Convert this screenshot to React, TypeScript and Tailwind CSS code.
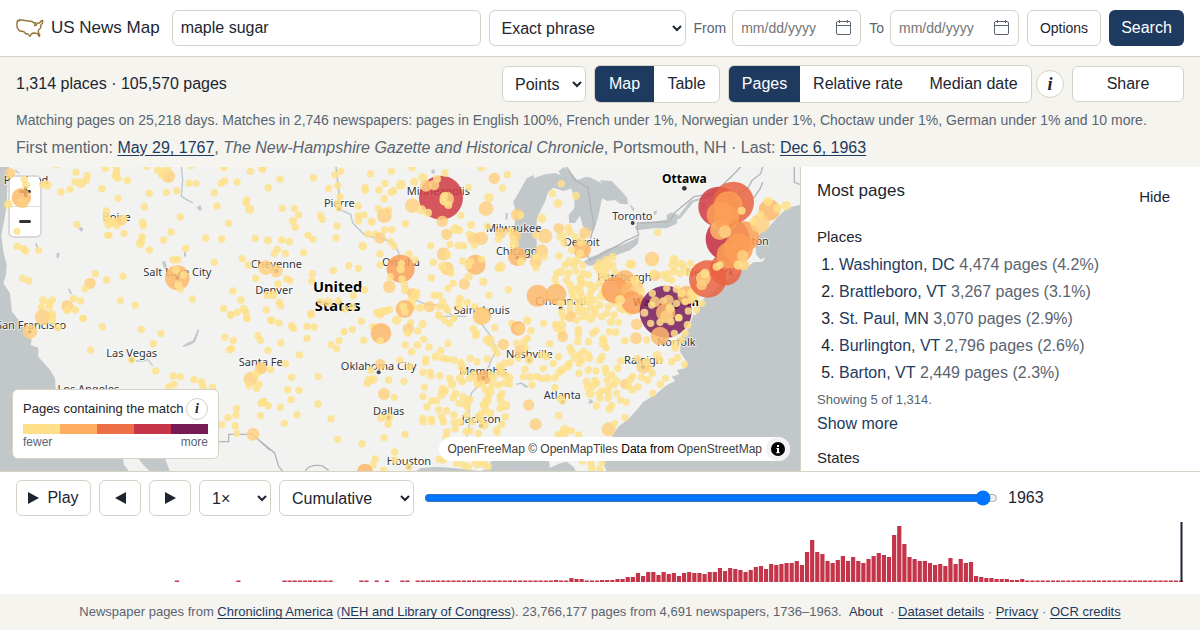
import React from "react";

const control =
  "h-9 rounded-md border border-[#d6d2c6] bg-white text-[#1c2530] text-base";
const link = "text-[#1e3a5f] underline underline-offset-2";

type Tile = {
  x: number;
  y: number;
  water?: string[];
  rivers?: string[];
  borders?: string[];
  dots: string;
};

// The map is split in six tiles. Dots are "x,y,radius,colour" with radius and colour optional.
const tiles: Tile[] = [
  {
    x: 0,
    y: -6,
    water: [
      "M0 0H28L24 30 22 60 20 120 12 170 4 210 10 260 20 300 18 330 10 355 30 385 36 440 60 470H0Z",
      "M590 128l10 -8 6 12 -6 6zM235 190l10 -4 6 8 -8 6zM105 236l6 -2 4 14 -4 2zM170 264l8 0 -2 16 -6 0zM204 370l6 2 6 14 -6 2zM486 290l10 -2 4 18 8 14 -8 4 -10 -20zM552 262l6 0 0 14 -6 -2z",
    ],
    rivers: ["M544 4l4 40 -4 50 20 12 16 8", "M45 15l12 10"],
    dots: "30,25,16 73,43 78,60,12 128,58 141,60,14 64,98,29,1 25,118,13 68,112,18 51,199 51,244 70,250 77,258 116,256 183,81 210,73 228,22 225,50 243,55,15 262,32 260,45 170,0 306,71,11 316,10 349,8 350,20 347,32,12 354,40 382,46 354,100 448,85 440,4 473,15 505,34,20 490,22 500,12,14 486,30 500,82 530,77 567,55 588,55 573,2 433,125 428,172 430,182 513,201 541,156 491,225 426,215 421,236,13 424,228 448,255 319,138 319,152 320,165 330,170,14 345,172,14 350,180,13 365,165,16 372,160 325,180 327,211,11 323,211 372,205 231,178 672,8 674,48 663,55 643,83 651,123 711,51 751,19 786,11 740,105 738,113 749,133,14 686,175 617,219 665,222 766,220 557,250 643,292 727,281 745,300 767,340 520,284 533,284 532,338,37,1 528,315,13 551,330 535,360,12 541,372 577,402 699,378 723,405 671,431 692,448 712,442 731,432,12 738,442 286,326 320,345 369,334 361,406 406,421 270,355,17 255,371 242,408 221,401 202,423,18 202,435,12 226,435 249,460 68,340 86,347 129,406,12 124,427 157,405 148,415 148,425 155,447,12 128,457,24 741,460",
  },
  {
    x: 780,
    y: -6,
    water: [
      "M512 18l10 -6 4 10 -8 6zM800 40L822 30V110L790 90 765 118 760 112ZM738 142l6 4 -2 18 -6 -2zM775 120L830 90V280H800L770 260 762 220 765 160Z",
    ],
    rivers: [
      "M228 4l4 40 6 50 -2 38 36 16 6 26 34 34 28 10 30 4 30 10 16 30 4 30",
      "M228 4l5 40 5 55",
      "M440 360l16 40 40 18 40 2 26 20 30 22",
    ],
    dots: "8,12 25,68 60,42 24,226,12 65,225 88,230 67,130 104,130 116,149 99,168,12 106,187 181,152 187,163 160,38,11 206,70 225,30 242,19 233,62 240,95 237,128,11 233,115 231,183 228,219 144,211 159,223 131,263 52,253 43,265 76,265 332,26 394,19 375,55 315,68,11 315,75 357,75 393,82 401,77 423,59,15 373,101 295,123 295,152 312,150 295,168 335,170,12 355,131 386,135 373,152,22 373,195 395,194 324,207 347,207 360,219,17 308,243,13 392,230 402,243 436,176 360,267 360,300 447,267 456,8 488,37,13 463,50,12 457,122,22 543,98,66,3 531,42,12 522,60,16 498,62,18 560,102,22 553,94,12 565,120,12 550,108 485,135,14 504,143,12 547,169,17 555,24 626,67 664,8,11 703,40,17 742,29 728,69 687,98,14 678,131,22 603,151 633,180,12 585,192,14 597,195,12 560,208,17 683,184 771,149,18 722,205,17 750,198,12 715,222 766,212,17 760,220 763,237,15 664,220,20 640,220,18 628,208 643,240 570,238 595,242,11 611,242,11 512,242 550,267,20 562,270 520,292 561,310,20 548,305,14 572,323,12 608,288 647,299,30,1 632,290 625,302 665,283 722,305,15 715,310 772,275,28,1 514,339 580,355 564,370 613,357,17 626,335,12 670,350,12 687,391 745,374 782,290 422,311,42,2 425,295,11 422,313,12 391,335,11 388,365,19 426,342 433,358 435,375,12 465,285 457,385,16 470,382 466,392,14 455,405,14 455,425,13 480,428,12 508,425,17 537,425 548,410 555,425 562,435 434,432,27,1 430,425,12 435,440 388,434 378,438,12 366,440,13 350,443 522,391 538,391 600,400 598,425 645,425 597,412 667,452,26,1 622,412 266,302 295,310 313,375 157,326 155,348 220,317 280,392 235,408 205,412,14 182,410 255,432 278,425 153,445 17,308,22 49,318,19 54,357 80,342 90,346 22,390,12 40,390,13 58,412 62,422 19,435 536,450",
  },
  {
    x: 1560,
    y: -6,
    water: [
      "M-20 110L0 80 15 62 45 38 75 28 105 24 135 35 160 55 150 72 130 78 100 68 85 80 75 110 55 150 42 190 45 220 35 250 10 275 -10 265V150Z",
      "M132 6L150 20 172 45 200 35 212 38 240 52 268 72 286 105 262 108 246 100 240 130 232 165 222 196 205 202 188 182 180 152 165 174 148 174 146 150 163 130 164 100 150 62 126 40 116 18Z",
      "M240 46L275 48 304 78 322 100 324 118 300 116 268 92Z",
      "M190 290L212 276 235 268 262 252 310 238 340 224 357 214 354 236 330 256 290 270 262 282 230 300 205 302Z",
      "M344 186L360 175 400 170 440 164 440 150 455 142 475 150 470 176 440 190 400 190 350 196Z",
      "M178 210l12 -4 6 12 -8 8z",
      "M470 160L510 108 560 92 600 62 590 82 560 100 520 112 480 162Z",
      "M327 118l10 6 8 10 -6 4zM400 140l10 -4 0 12 -8 2zM550 110l6 4 -2 20 -6 -4z",
      "M845 118L800 130 770 160 745 188 720 205 706 240 708 268 722 284 735 276 728 290 700 292 690 300 662 320 610 350 575 385 552 400 530 440 520 475H845Z",
    ],
    borders: [
      "M140 6l24 38 40 24 10 70 8 44 -12 44 -14 34 14 26 50 -26 60 -34 36 -16 -4 -16 0 -20 95 -4 20 -30 55 -45 60 -10 66 -64 20 -22",
      "M560 92h90l36 -26 10 -20 26 -20 6 -20",
      "M700 100l20 -28 8 -20",
      "M823 6v46l17 6",
    ],
    dots: "124,56 97,86 114,115,13 168,92,12 66,160,13 2,150 75,213,22 47,210 117,190,16 145,188 148,200,12 125,215,15 195,203,17 165,215 133,235 186,253,27,1 180,265,12 155,255 183,230,14 65,257,19 73,275 47,290,18 48,308 48,275,12 3,290,11 117,273 413,202 149,290,13 170,285,12 163,300 188,300 168,318,11 190,325 145,325,12 135,300 122,320,12 110,325 105,343 110,362 180,340 205,330 396,282,22 331,298,14 337,297 278,275,12 260,285,13 240,295,13 262,305,14 238,315,12 278,300 255,320 285,320 230,305 462,283,13 460,300,15 485,296,12 512,295 490,305 405,332,16 400,325 430,330,12 445,325 462,320 480,325 440,340 455,345 503,320,14 531,307 53,392,33,1 108,388,31,1 150,360,12 180,362 183,345 208,358 155,380 180,380,12 215,375 160,395 185,395 210,390 175,410 150,415 195,410 122,415 205,405 225,365 125,440 150,435 175,440 175,425 130,455 155,450 200,440 225,432,12 225,445 247,378 242,395 260,395 265,425 285,415 290,390 282,450 300,430 310,435 330,440 260,445 190,355 168,372 140,345 222,405 240,420 212,425 185,430 245,335 262,335 240,355 315,345,30,1 285,375,40,2 325,375,22,1 340,412,35,2 352,365,18 365,380 300,405,15 345,345,14 437,440,78,5 440,370 470,372,12 397,385 405,410,16 395,420 430,408 445,405,16 437,443,29,1 450,430,14 470,415 505,438,11 475,458 373,443,12 500,390,28,1 485,385,12 515,385,14 495,410 520,375 527,358 541,370 526,395 515,405 545,415 530,435 623,222,66,4 595,125,60,3 640,112,62,6 617,313,48,6 563,342,56,6 630,270,40,2 600,150,40,2 625,122,43,2 600,195,30,1 620,160,38,2 672,215,46,2 655,250,44,2 615,200,19 665,137,12 668,272,17 672,300,16 655,300,14 590,305,12 600,300 550,340,22 555,325,14 545,360,16 748,135,32,1 744,109,14 773,130,14 799,122,14 720,175,29 722,148 700,170",
  },
  {
    x: 0,
    y: 444,
    water: [
      "M0 0H36L50 14 75 40 95 75 92 90 115 98 115 125 150 165 165 190 168 240 240 330 368 425 372 450 392 475H0Z",
      "M380 400L415 430 430 450 455 475H512L495 430 480 400Z",
      "M548 92l20 -12 10 -2 16 -36 4 2 -12 36 -16 10 -20 6z",
    ],
    rivers: ["M408 138h20l16 -4 14 18"],
    borders: ["M640 380h46v-22h72l52 48"],
    dots: "90,50,22 158,5 157,18,11 174,38 249,10 307,35 272,105 424,43 483,55 460,86 395,135 467,168 520,183 541,185 582,194 605,201 522,208 507,215 609,215 638,217 674,67 700,76 695,100 688,104 773,62 781,76 692,1 740,9 752,192,21 783,160,18 770,175,13 747,212 777,208 770,220 709,280 708,300 684,308 665,329 706,333 710,355 759,358,19 781,302 791,260,12 783,265",
  },
  {
    x: 780,
    y: 444,
    water: ["M460 475L480 460 530 455 590 460 660 468 690 460 692 438 810 430V475Z"],
    rivers: [
      "M660 20l30 40 20 45 -16 30 -24 60 -36 40 -8 40 4 40 -10 60",
      "M768 208l16 -4 20 12",
      "M540 4h80",
    ],
    borders: ["M0 378l44 36 12 40 16 20M136 468q10 -20 50 -16l20 14"],
    dots: "32,15,11 36,17 57,24 95,32 100,40,11 141,34 162,36 153,0 141,70 62,83 24,106 118,120 76,146 32,164 5,160,16 95,187 175,184 83,224 117,226 93,254 8,262,12 25,272 61,277 111,299 174,267 73,325 213,311 233,373 306,386 252,50 277,43 304,19 237,77 213,89 230,101 311,76 339,35 363,55,31,1 361,77 360,0 410,15,14 452,23 445,42,17 443,55 488,27,12 474,48 491,73 436,90 472,90 455,110 507,96 420,135 448,155 361,148,16 333,165 340,193,13 327,195,13 322,206 386,195 432,199 372,237,18 403,247 386,308,14 363,309,12 384,328 435,358 372,368 404,411 346,432 339,450 315,470,24,1 371,466 446,456 405,435 537,2 553,15 569,25 581,10 564,86 542,107 498,132 497,142 489,172 513,182 511,172 527,125,12 550,130 563,133 583,135 540,182 569,190 576,208,13 493,217 489,244 501,275 515,258 530,257 548,222,13 556,228 545,238,13 587,235 580,248 536,284 560,287 545,305 550,320 489,310 489,320 514,313 514,320 582,300 583,322 585,341 561,350 558,366 603,142 631,130 651,140 682,132 640,42 650,55 647,62 663,5,25 704,38 682,75,14 693,72 690,85 704,100 711,115 730,88,17 755,25 774,40,22,1 604,155,13 612,170 600,190,12 607,200 630,190,12 640,178 650,195 652,208 672,188,22,1 665,207 695,180 700,190 696,210 716,210 720,155,13 735,145,12 752,141 718,175 735,180,12 748,188,12 735,205 748,207 725,165 608,245 597,265,11 614,267 621,253 622,276 630,255 677,225 690,230,14 685,245 680,258,14 673,270,14 676,285 720,245 726,235 722,258 737,272,14 720,280 736,305 690,295,12 665,295 655,305 663,315 672,330,14 726,328 711,344 711,352 655,355 630,348 618,350 620,300 600,322,12 636,320 780,105,16 775,130 770,85 537,433 550,435 590,445 610,450 650,445,14 670,445,14 685,455 625,455",
  },
  {
    x: 1560,
    y: 444,
    water: [
      "M-10 430H85L90 458 120 445 140 440 160 455 172 475H-10Z",
      "M520 0L505 40 484 60 480 110 500 140 494 160 470 165 478 178 455 185 466 198 440 210 405 240 370 260 350 285 325 312 295 335 272 370 262 400 245 430 262 475H845V0Z",
      "M205 250l10 4 6 6 -8 6 -10 -2 6 -6zM0 205l10 4 12 8 -4 2z",
    ],
    dots: "0,42,16 22,17,13 33,47 22,70 12,80 15,98 71,25 107,28 110,40 125,30,14 125,50,13 128,65,16 152,5,16 170,15 175,45,12 175,60 190,5 212,10,14 228,47 218,55 206,80 173,80 245,5 272,20,12 295,22 268,50 287,52,12 250,72,12 250,85,14 258,98 315,77 350,28,17 348,70,18 380,75 89,86 28,135,14 15,163 70,160 67,120 80,125 100,145 115,125,11 150,98 155,110,12 148,145 142,155,12 125,165,12 118,172 105,188 82,190,12 65,190 50,185 30,186 10,185 36,210 177,175 178,145 163,130 178,120 185,135 190,110 205,118 208,130 247,125 240,135 205,165 228,168 256,160 258,172 293,160 302,138 200,200,12 203,215,12 210,235,14 225,197 230,205 220,212 237,235 245,228 262,195 275,180 288,198,13 280,210 265,215 265,230 265,248,12 240,250 290,235 302,255 319,262 275,272 268,282 229,273 316,207,16 330,195 338,185 325,215 338,225 354,215 105,218 128,258 120,250 26,270,17 47,328,18 116,302 266,343,21 284,325 315,308 398,235 421,208 436,190 383,195 397,175 390,160 370,155,21 352,130 365,187 380,140,12 411,120,13 420,135 455,140 472,128 494,148 467,98,12 465,85 484,75 420,63,28,1 463,55 495,55 503,30,12 392,25 420,22 453,20 477,8 440,5,20 134,345,15 154,348 176,360 130,360,15 115,358 213,445 240,460 215,460 247,440 187,438",
  },
];

const dotColors = [
  "#fee08b",
  "#fdb96b",
  "#fb9f57",
  "#d03a43",
  "#c2293f",
  "#771a5a",
  "#ea6241",
];

// name, x, y of the baseline centre, and the city marker if it shows
const cities: [string, number, number, number?, number?][] = [
  ["Portland", 78, 50],
  ["Boise", 350, 160],
  ["Salt Lake City", 532, 324, 532, 333],
  ["Cheyenne", 829, 302, 829, 312],
  ["Denver", 822, 378],
  ["Pierre", 1018, 118, 1017, 126],
  ["Minneapolis", 1315, 81],
  ["Omaha", 1203, 296],
  ["Milwaukee", 1541, 194],
  ["Chicago", 1550, 261, 1552, 272],
  ["Detroit", 1745, 234],
  ["Toronto", 1897, 158, 1898, 168],
  ["Pittsburgh", 1873, 340],
  ["Cincinnati", 1682, 412, 1682, 424],
  ["New York", 2130, 326],
  ["Boston", 2252, 233],
  ["San Francisco", 93, 484, 89, 494],
  ["Las Vegas", 395, 568, 395, 579],
  ["Los Angeles", 265, 676],
  ["Santa Fe", 782, 594, 782, 604],
  ["Oklahoma City", 1136, 606, 1136, 616],
  ["Saint Louis", 1445, 440],
  ["Nashville", 1588, 570, 1588, 580],
  ["Memphis", 1450, 622, 1450, 632],
  ["Dallas", 1166, 742, 1166, 752],
  ["Jackson", 1444, 766, 1444, 776],
  ["Houston", 1227, 892, 1227, 901],
  ["Atlanta", 1687, 694, 1687, 704],
  ["Raleigh", 1930, 590, 1929, 600],
  ["Norfolk", 2029, 534],
];

function BaseMap() {
  return (
    <svg
      viewBox="0 0 2400 912"
      preserveAspectRatio="xMidYMid slice"
      className="absolute inset-0 h-full w-full"
      role="img"
      aria-label="Map of the United States"
    >
      {tiles.map((tile, i) => (
        <g key={i} transform={`translate(${tile.x} ${tile.y})`}>
          {tile.water?.map((d) => (
            <path key={d} d={d} fill="#c2c8ca" />
          ))}
          {tile.rivers?.map((d) => (
            <path key={d} d={d} fill="none" stroke="#bcc8cd" strokeWidth="4" />
          ))}
          {tile.borders?.map((d) => (
            <path key={d} d={d} fill="none" stroke="#b3b4b5" strokeWidth="4" />
          ))}
        </g>
      ))}
      <g
        textAnchor="middle"
        stroke="#fff"
        strokeOpacity="0.8"
        strokeWidth="5"
        strokeLinejoin="round"
        paintOrder="stroke"
        className="font-['Noto_Sans',sans-serif] text-[33px]"
        fill="#333"
      >
        {cities.map(([name, x, y, cx, cy]) => (
          <React.Fragment key={name}>
            <text x={x} y={y + 2}>
              {name}
            </text>
            {cx && <circle cx={cx} cy={cy} r="6" fill="#444" stroke="none" />}
          </React.Fragment>
        ))}
        <g fill="#000" className="font-bold">
          <text x="2053" y="49" className="text-[36px]">
            Ottawa
          </text>
          <text x="1998" y="418">
            Washington
          </text>
          <text x="1013" y="376" className="text-[44px]">
            United
          </text>
          <text x="1013" y="431" className="text-[44px]">
            States
          </text>
        </g>
        <circle cx="2053" cy="64" r="7" fill="#333" stroke="none" />
      </g>
    </svg>
  );
}

function Dots() {
  return (
    <svg
      viewBox="0 0 2400 912"
      preserveAspectRatio="xMidYMid slice"
      className="pointer-events-none absolute inset-0 h-full w-full"
      aria-hidden="true"
    >
      {tiles.map((tile, i) => (
        <g key={i} transform={`translate(${tile.x} ${tile.y})`}>
          {tile.dots.split(" ").map((dot, j) => {
            const [x, y, r = 11, color = 0] = dot.split(",").map(Number);
            const fill = !color && r > 15 ? "#fed081" : dotColors[color];
            return (
              <circle key={j} cx={x} cy={y} r={r} fill={fill} fillOpacity="0.85" />
            );
          })}
        </g>
      ))}
    </svg>
  );
}

function DateField({ label, id }: { label: string; id: string }) {
  return (
    <div className="flex items-center gap-1.5">
      <label htmlFor={id} className="text-sm text-[#5a6470]">
        {label}
      </label>
      <div className="relative">
        <input
          id={id}
          type="text"
          placeholder="mm/dd/yyyy"
          className="h-9 w-[129px] rounded-md border border-[#d6d2c6] bg-white pl-2 text-sm placeholder:text-[#757575]"
        />
        <button
          type="button"
          aria-label={`Pick date: ${label}`}
          className="absolute top-2.5 right-2.5"
        >
          <svg width="15" height="15" viewBox="0 0 15 15" fill="none" stroke="#5a6470">
            <rect x="0.5" y="1.5" width="14" height="13" rx="1.5" />
            <path d="M0.5 5.5H14.5M3.5 0V3M11.5 0V3" />
          </svg>
        </button>
      </div>
    </div>
  );
}

type SelectProps = { label: string; value: string; className: string };

function Select({ label, value, className }: SelectProps) {
  return (
    <select aria-label={label} className={`${control} ${className}`}>
      <option>{value}</option>
    </select>
  );
}

function InfoButton({ className }: { className: string }) {
  return (
    <button
      type="button"
      aria-label="More information"
      className={`flex items-center justify-center rounded-full border border-[#d6d2c6] bg-white font-['Liberation_Serif',serif] font-bold text-[#1c2530] italic ${className}`}
    >
      i
    </button>
  );
}

function Header() {
  return (
    <header className="flex h-[57px] shrink-0 items-center gap-2 border-b border-[#d6d2c6] bg-white px-4">
      <a href="#" className="mr-1 flex items-center gap-[7px] text-[17px]">
        <svg width="28" height="20" viewBox="0 0 28 20" fill="none" stroke="#96733a" strokeWidth="1.4" strokeLinejoin="round">
          <path d="M1.5 2.4L3 3 3.4 1.8 16.2 3.5 17.5 4.8 19.6 4.6 18.6 7.6 20 7.4 21.4 5 23.6 5 25.6 2.4 26.8 2.6 26.4 5.4 24.6 7.4 25 9.4 22.4 12.4 22.4 14.4 23.8 17.4 23.2 18.4 21 15.4 17.4 15 15.4 16 14 18.4 11.6 15.6 10 16 8 13.8 3.4 12.8 1.2 9.6 0.8 6Z" />
        </svg>
        US News Map
      </a>
      <input
        type="text"
        aria-label="Search phrase"
        defaultValue="maple sugar"
        className={`${control} min-w-0 flex-1 px-2`}
      />
      <Select label="Match type" value="Exact phrase" className="w-[197px] px-2" />
      <DateField label="From" id="from" />
      <DateField label="To" id="to" />
      <button type="button" className="h-9 w-[74px] rounded-md border border-[#d6d2c6] text-sm">
        Options
      </button>
      <button type="submit" className="h-9 w-[75px] rounded-md bg-[#1e3a5f] text-white">
        Search
      </button>
    </header>
  );
}

function Summary() {
  return (
    <section className="flex h-[110px] shrink-0 flex-col bg-[#f5f4ef] px-4 pt-2 text-[#5a6470]">
      <div className="flex items-center text-[#1c2530]">
        <p className="flex-1">1,314 places · 105,570 pages</p>
        <Select label="Markers" value="Points" className="mr-2 w-[84px] px-2" />
        <div className="mr-2 flex h-[38px] overflow-hidden rounded-md border border-[#d6d2c6] bg-white">
          <button type="button" className="w-[59px] bg-[#1e3a5f] text-white">
            Map
          </button>
          <button type="button" className="w-[65px]">
            Table
          </button>
        </div>
        <div className="mr-1 flex h-[38px] overflow-hidden rounded-md border border-[#d6d2c6] bg-white">
          <button type="button" className="w-[71px] bg-[#1e3a5f] text-white">
            Pages
          </button>
          <button type="button" className="w-[116px]">
            Relative rate
          </button>
          <button type="button" className="w-[115px]">
            Median date
          </button>
        </div>
        <InfoButton className="mr-2 size-7 text-lg" />
        <button type="button" className={`${control} w-28`}>
          Share
        </button>
      </div>
      <p className="mt-1 text-sm leading-[26px] whitespace-nowrap">
        Matching pages on 25,218 days. Matches in 2,746 newspapers: pages in
        English 100%, French under 1%, Norwegian under 1%, Choctaw under 1%,
        German under 1% and 10 more.
      </p>
      <p className="mt-0.5 text-base leading-[26px] whitespace-nowrap">
        First mention:{" "}
        <a href="#" className={link}>
          May 29, 1767
        </a>
        , <em>The New-Hampshire Gazette and Historical Chronicle</em>,
        Portsmouth, NH · Last:{" "}
        <a href="#" className={link}>
          Dec 6, 1963
        </a>
      </p>
    </section>
  );
}

function Legend() {
  return (
    <div className="absolute bottom-3 left-3 w-[207px] rounded-md border border-[#d6d2c6] bg-white px-2.5 pt-2 pb-2">
      <div className="flex items-center justify-between text-[13px]">
        Pages containing the match
        <InfoButton className="size-[22px] text-sm" />
      </div>
      <div className="mt-1 flex h-2.5">
        <span className="flex-1 bg-[#fee08b]" />
        <span className="flex-1 bg-[#fdae61]" />
        <span className="flex-1 bg-[#ec6f47]" />
        <span className="flex-1 bg-[#c73549]" />
        <span className="flex-1 bg-[#771a55]" />
      </div>
      <div className="flex justify-between text-xs text-[#5a6470]">
        <span>fewer</span>
        <span>more</span>
      </div>
    </div>
  );
}

function MapView() {
  return (
    <div className="relative min-w-0 flex-1 overflow-hidden bg-[#f2f3f0]">
      <BaseMap />
      <div className="absolute top-2.5 left-2.5 flex w-[30px] flex-col rounded bg-white shadow-[0_0_0_2px_rgba(0,0,0,0.1)]">
        <button type="button" aria-label="Zoom in" className="flex h-[30px] items-center justify-center border-b border-[#ddd]">
          <span className="absolute h-[3px] w-3 rounded bg-[#333]" />
          <span className="absolute h-3 w-[3px] rounded bg-[#333]" />
        </button>
        <button type="button" aria-label="Zoom out" className="flex h-[29px] items-center justify-center">
          <span className="h-[3px] w-3 rounded bg-[#333]" />
        </button>
      </div>
      <Dots />
      <Legend />
      <div className="absolute right-2.5 bottom-2.5 flex h-6 items-center rounded-xl bg-white pl-2 text-xs text-black">
        <p>
          <a href="#" className="text-[#404040]">OpenFreeMap</a>{" "}
          <a href="#" className="text-[#404040]">© OpenMapTiles</a> Data from{" "}
          <a href="#" className="text-[#404040]">OpenStreetMap</a>
        </p>
        <button type="button" aria-label="Toggle attribution" className="ml-1 flex size-6 items-center justify-center rounded-full bg-[#f2f2f2]">
          <svg width="14" height="14" viewBox="0 0 14 14">
            <circle cx="7" cy="7" r="7" />
            <path d="M6 3h2v2H6zM5.4 6H8v4.2h.8v1H5.2v-1H6V7h-.6z" fill="#fff" />
          </svg>
        </button>
      </div>
    </div>
  );
}

const places = [
  ["Washington, DC", "4,474 pages (4.2%)"],
  ["Brattleboro, VT", "3,267 pages (3.1%)"],
  ["St. Paul, MN", "3,070 pages (2.9%)"],
  ["Burlington, VT", "2,796 pages (2.6%)"],
  ["Barton, VT", "2,449 pages (2.3%)"],
];

function Rankings() {
  return (
    <aside className="w-[400px] shrink-0 overflow-hidden border-l border-[#d6d2c6] bg-white px-4 pt-3">
      <div className="flex h-9 justify-between">
        <h2 className="text-[17px] leading-6">Most pages</h2>
        <button type="button" className="mt-1 h-7 px-3.5 text-[15px]">
          Hide
        </button>
      </div>
      <h3 className="mt-2.5 text-[15px] leading-6">Places</h3>
      <ol className="mt-1 ml-[22px] list-decimal">
        {places.map(([name, count]) => (
          <li key={name} className="h-[27px] text-base leading-6">
            <button type="button" className="text-[#1e3a5f]">
              {name}
            </button>{" "}
            <span className="text-[#5a6470]">{count}</span>
          </li>
        ))}
      </ol>
      <p className="text-[13px] leading-6 text-[#5a6470]">Showing 5 of 1,314.</p>
      <button type="button" className="block h-6 text-base text-[#1e3a5f]">
        Show more
      </button>
      <h3 className="mt-2.5 text-[15px] leading-6">States</h3>
    </aside>
  );
}

const firstYear = 1736;
const earlyYears = [31, 43, 52, 53, 54, 55, 56, 57, 58, 59, 60, 61, 67, 68, 70, 72, 75, 76];
const laterHeights: Record<number, number> = { 105: 2, 108: 4, 109: 3, 110: 3 };
const peakHeights = [
  2, 2, 2, 3, 3, 5, 5, 9, 6, 10, 10, 7, 10, 8, 9, 6, 9, 10, 9, 9, 8, 10, 10, 14,
  11, 14, 13, 12, 10, 12, 15, 16, 13, 18, 17, 18, 19, 19, 21, 17, 30, 42, 30,
  28, 21, 19, 22, 26, 21, 25, 21, 19, 23, 26, 29, 27, 25, 47, 56, 38, 25, 23,
  21, 21, 19, 17, 18, 16, 24, 18, 23, 19, 20, 6, 5, 4, 4, 3, 3, 3, 2, 2, 3,
];

const bars = Array.from({ length: 228 }, (_, i) => {
  if (i < 78) return earlyYears.includes(i) ? 1.5 : 0;
  return laterHeights[i] ?? peakHeights[i - 114] ?? 1.5;
});

function Timeline() {
  return (
    <section className="shrink-0 border-t border-[#d6d2c6] bg-white px-4 pt-2 pb-3">
      <div className="flex items-center gap-2">
        <button type="button" className={`${control} flex w-[75px] items-center justify-center gap-2`}>
          <svg width="11" height="12" viewBox="0 0 11 12" fill="#1c2530">
            <path d="M0 0L11 6 0 12Z" />
          </svg>
          Play
        </button>
        <button type="button" aria-label="Previous year" className={`${control} flex w-[42px] items-center justify-center`}>
          <svg width="11" height="12" viewBox="0 0 11 12" fill="#1c2530">
            <path d="M11 0L0 6 11 12Z" />
          </svg>
        </button>
        <button type="button" aria-label="Next year" className={`${control} flex w-[42px] items-center justify-center`}>
          <svg width="11" height="12" viewBox="0 0 11 12" fill="#1c2530">
            <path d="M0 0L11 6 0 12Z" />
          </svg>
        </button>
        <Select label="Speed" value="1×" className="w-[72px] px-2" />
        <Select label="Mode" value="Cumulative" className="w-[135px] px-2" />
        <input
          type="range"
          aria-label="Year"
          min={firstYear}
          max={1966}
          defaultValue={1963}
          className="ml-0.5 min-w-0 flex-1"
        />
        <output className="ml-0.5 w-44 text-base">1963</output>
      </div>
      <svg
        viewBox="0 0 1168 60"
        preserveAspectRatio="none"
        className="mt-1.5 block h-[60px] w-full"
        role="img"
        aria-label="Pages per year"
      >
        {bars.map((h, i) => (
          <rect key={i} x={i * 5.123} y={60 - h} width="4.2" height={h} fill="#c5354a" />
        ))}
        <rect x="1164.5" y="0" width="2" height="60" fill="#1c2530" />
      </svg>
    </section>
  );
}

function Footer() {
  return (
    <footer className="flex h-9 shrink-0 items-center justify-center bg-[#f5f4ef] text-[13px] text-[#5a6470]">
      <p className="whitespace-pre">
        Newspaper pages from <a href="#" className={link}>Chronicling America</a> (
        <a href="#" className={link}>NEH and Library of Congress</a>). 23,766,177
        {" pages from 4,691 newspapers, 1736–1963.  "}
        <button type="button" className="text-[#1e3a5f]">About</button>
        {"  · "}
        <a href="#" className={link}>Dataset details</a> ·{" "}
        <a href="#" className={link}>Privacy</a> ·{" "}
        <a href="#" className={link}>OCR credits</a>
      </p>
    </footer>
  );
}

export default function App() {
  return (
    <div className="flex h-screen flex-col bg-white font-['Liberation_Sans',Arial,sans-serif] text-base text-[#1c2530]">
      <Header />
      <Summary />
      <main className="flex min-h-0 flex-1">
        <MapView />
        <Rankings />
      </main>
      <Timeline />
      <Footer />
    </div>
  );
}
